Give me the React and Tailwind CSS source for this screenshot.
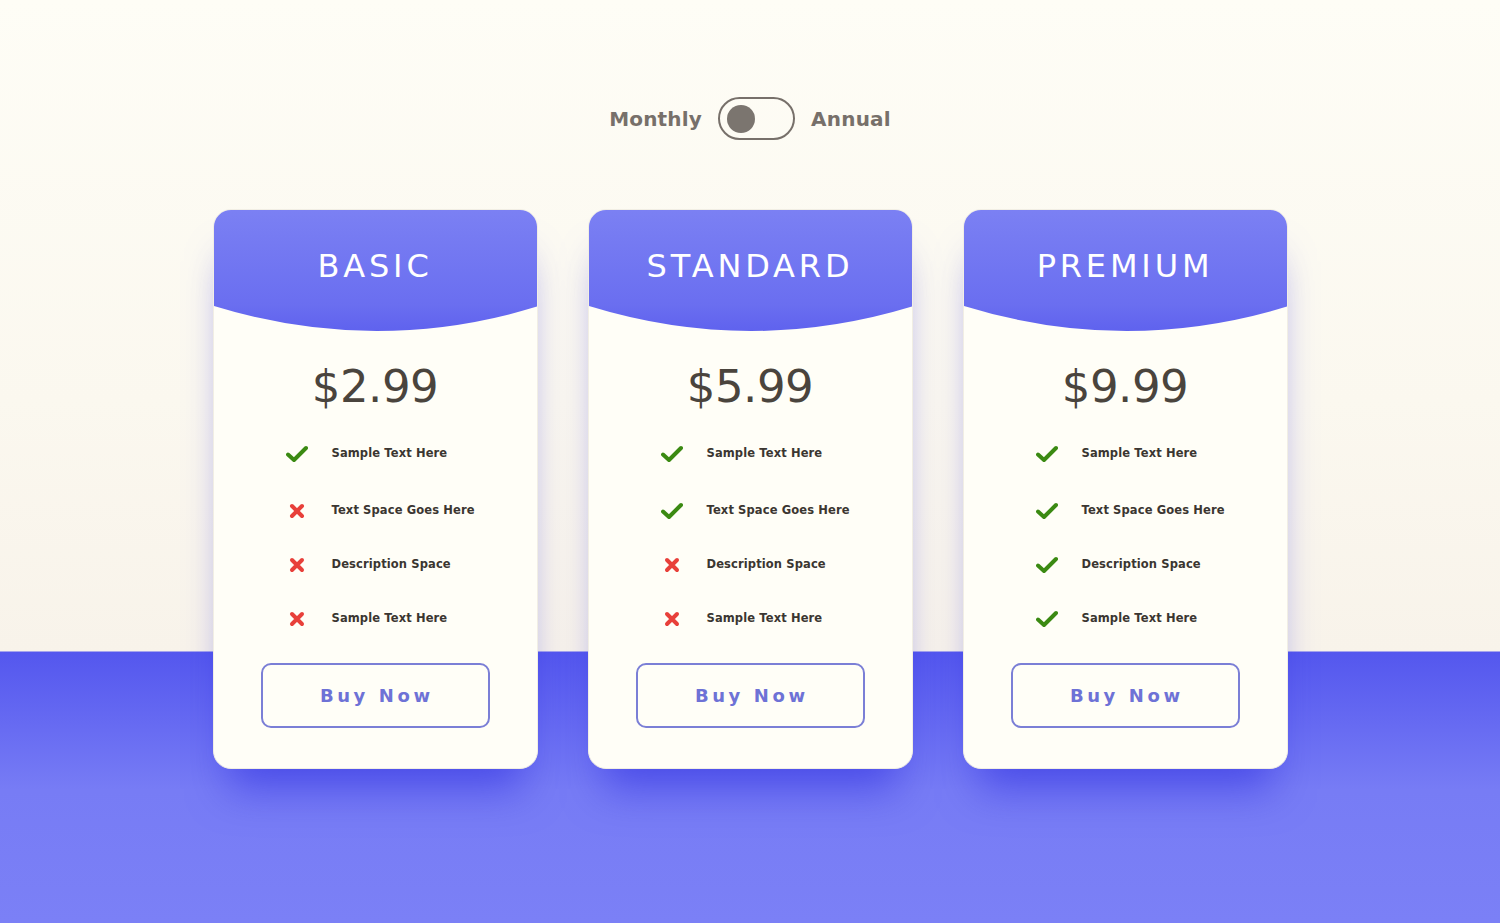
import { useState } from 'react';

const plans = [
  { name: 'BASIC', price: '$2.99', features: [true, false, false, false] },
  { name: 'STANDARD', price: '$5.99', features: [true, true, false, false] },
  { name: 'PREMIUM', price: '$9.99', features: [true, true, true, true] },
];

const labels = ['Sample Text Here', 'Text Space Goes Here', 'Description Space', 'Sample Text Here'];

function CheckIcon() {
  return (
    <svg width="22" height="18" viewBox="0 0 22 18">
      <path d="M2 9.5 L8 15 L20 3" fill="none" stroke="#3b8a12" strokeWidth="4" strokeLinecap="round" strokeLinejoin="round" />
    </svg>
  );
}

function CrossIcon() {
  return (
    <svg width="16" height="16" viewBox="0 0 16 16">
      <path d="M3 3 L13 13 M13 3 L3 13" fill="none" stroke="#e8403a" strokeWidth="4" strokeLinecap="round" />
    </svg>
  );
}

function PlanCard({ plan }) {
  return (
    <div className="w-[325px] h-[560px] rounded-[18px] bg-[#fffef7] overflow-hidden flex flex-col shadow-[0_36px_40px_-16px_rgba(50,50,225,0.6)] border border-[#f1eee4]">
      <div className="h-[96px] bg-gradient-to-b from-[#7b80f3] to-[#6a6ef0] flex items-end justify-center pb-[5px]">
        <h2 className="text-white text-[32px] tracking-[0.12em] font-normal leading-none translate-y-[-19px]">{plan.name}</h2>
      </div>
      <svg className="block -mt-px" width="325" height="26" viewBox="0 0 325 26" preserveAspectRatio="none">
        <defs>
          <linearGradient id={`g-${plan.name}`} x1="0" y1="0" x2="0" y2="1">
            <stop offset="0" stopColor="#6a6ef0" />
            <stop offset="1" stopColor="#5f62ee" />
          </linearGradient>
        </defs>
        <path d="M0 0 H325 V1 Q162.5 51 0 1 Z" fill={`url(#g-${plan.name})`} />
      </svg>
      <div className="text-center text-[#4a443d] text-[45px] tracking-[-0.01em] leading-none mt-[33px]">{plan.price}</div>
      <ul className="mt-[35px] flex flex-col">
        {plan.features.map((ok, i) => (
          <li key={i} className={`flex items-center h-[20px] ${i === 0 ? '' : i === 1 ? 'mt-[37px]' : 'mt-[34px]'}`}>
            <span className="w-[118px] flex justify-end pr-[24px]">
              <span className="w-[22px] flex justify-center">{ok ? <CheckIcon /> : <CrossIcon />}</span>
            </span>
            <span className="text-[11.5px] font-bold tracking-[0.01em] text-[#3b3631]">{labels[i]}</span>
          </li>
        ))}
      </ul>
      <button className="mx-auto mt-[34px] w-[229px] h-[65px] rounded-[10px] border-2 border-[#7b7fd6] text-[#6e72d6] text-[18px] font-bold tracking-[0.2em] pl-[0.2em]">
        Buy Now
      </button>
    </div>
  );
}

export default function App() {
  const [annual, setAnnual] = useState(false);

  return (
    <div
      className="min-h-screen w-full bg-[linear-gradient(180deg,#fefdf6_0px,#fbf8ef_400px,#f8f3ea_651px,#5457ee_652px,#777cf5_790px,#7b80f6_923px)]"
      style={{ fontFamily: '"DejaVu Sans", "Noto Sans", sans-serif' }}
    >
      <div className="flex items-center justify-center gap-4 pt-[97px]">
        <span className="text-[20px] font-bold text-[#77706a] tracking-[0.01em]">Monthly</span>
        <button
          onClick={() => setAnnual(!annual)}
          className={`w-[77px] h-[43px] rounded-full border-2 border-[#77706a] flex items-center px-[7px] ${annual ? 'justify-end' : 'justify-start'}`}
        >
          <span className="w-[28px] h-[28px] rounded-full bg-[#7b756f]" />
        </button>
        <span className="text-[20px] font-bold text-[#77706a] tracking-[0.01em]">Annual</span>
      </div>

      <div className="flex justify-center gap-[50px] mt-[69px] pb-[154px]">
        {plans.map((p) => (
          <PlanCard key={p.name} plan={p} />
        ))}
      </div>
    </div>
  );
}
